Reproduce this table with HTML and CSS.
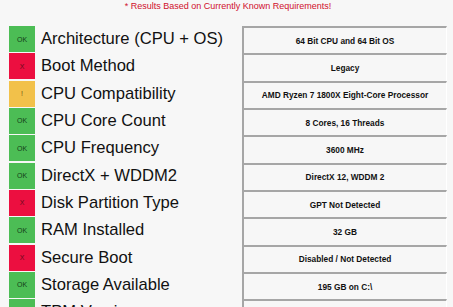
FILE: index.html
```html
<!DOCTYPE html>
<html>
<head>
<meta charset="utf-8">
<link rel="stylesheet" href="styles.css">
</head>
<body>
<div class="note">* Results Based on Currently Known Requirements!</div>
<div class="list">
  <div class="row"><div class="st ok">OK</div><div class="label">Architecture (CPU + OS)</div><div class="val">64 Bit CPU and 64 Bit OS</div></div>
  <div class="row"><div class="st bad">X</div><div class="label">Boot Method</div><div class="val">Legacy</div></div>
  <div class="row"><div class="st warn">!</div><div class="label">CPU Compatibility</div><div class="val">AMD Ryzen 7 1800X Eight-Core Processor</div></div>
  <div class="row"><div class="st ok">OK</div><div class="label">CPU Core Count</div><div class="val">8 Cores, 16 Threads</div></div>
  <div class="row"><div class="st ok">OK</div><div class="label">CPU Frequency</div><div class="val">3600 MHz</div></div>
  <div class="row"><div class="st ok">OK</div><div class="label">DirectX + WDDM2</div><div class="val">DirectX 12, WDDM 2</div></div>
  <div class="row"><div class="st bad">X</div><div class="label">Disk Partition Type</div><div class="val">GPT Not Detected</div></div>
  <div class="row"><div class="st ok">OK</div><div class="label">RAM Installed</div><div class="val">32 GB</div></div>
  <div class="row"><div class="st bad">X</div><div class="label">Secure Boot</div><div class="val">Disabled / Not Detected</div></div>
  <div class="row"><div class="st ok">OK</div><div class="label">Storage Available</div><div class="val">195 GB on C:\</div></div>
  <div class="row"><div class="st ok">OK</div><div class="label">TPM Version</div><div class="val">TPM 2.0</div></div>
</div>
</body>
</html>
```
FILE: styles.css
```css
html, body {
  margin: 0;
  padding: 0;
  background: #f7f7f7;
  font-family: "Liberation Sans", Arial, sans-serif;
  overflow: hidden;
}
.note {
  height: 26px;
  text-align: center;
  color: #d0102c;
  font-size: 9px;
  line-height: 12px;
  padding-left: 3px;
}
.list {
  padding-left: 9px;
  width: 438px;
}
.row {
  display: grid;
  grid-template-columns: 26px 1fr 205px;
  column-gap: 0;
  height: 27.33px;
}
.st {
  height: 26px;
  display: flex;
  align-items: center;
  justify-content: center;
  font-size: 7px;
}
.ok { background: #4cbd55; color: #14401a; }
.bad { background: #ec0f40; color: #6a0a1c; }
.warn { background: #f2c14a; color: #6a5010; }
.label {
  padding-left: 6px;
  font-size: 16.6px;
  line-height: 26px;
  color: #111;
  white-space: nowrap;
}
.val {
  border-top: 2px solid #a6a6a6;
  border-left: 2px solid #a6a6a6;
  border-right: 1px solid #ffffff;
  display: flex;
  align-items: center;
  justify-content: center;
  font-size: 8.3px;
  font-weight: bold;
  color: #111;
}
```
